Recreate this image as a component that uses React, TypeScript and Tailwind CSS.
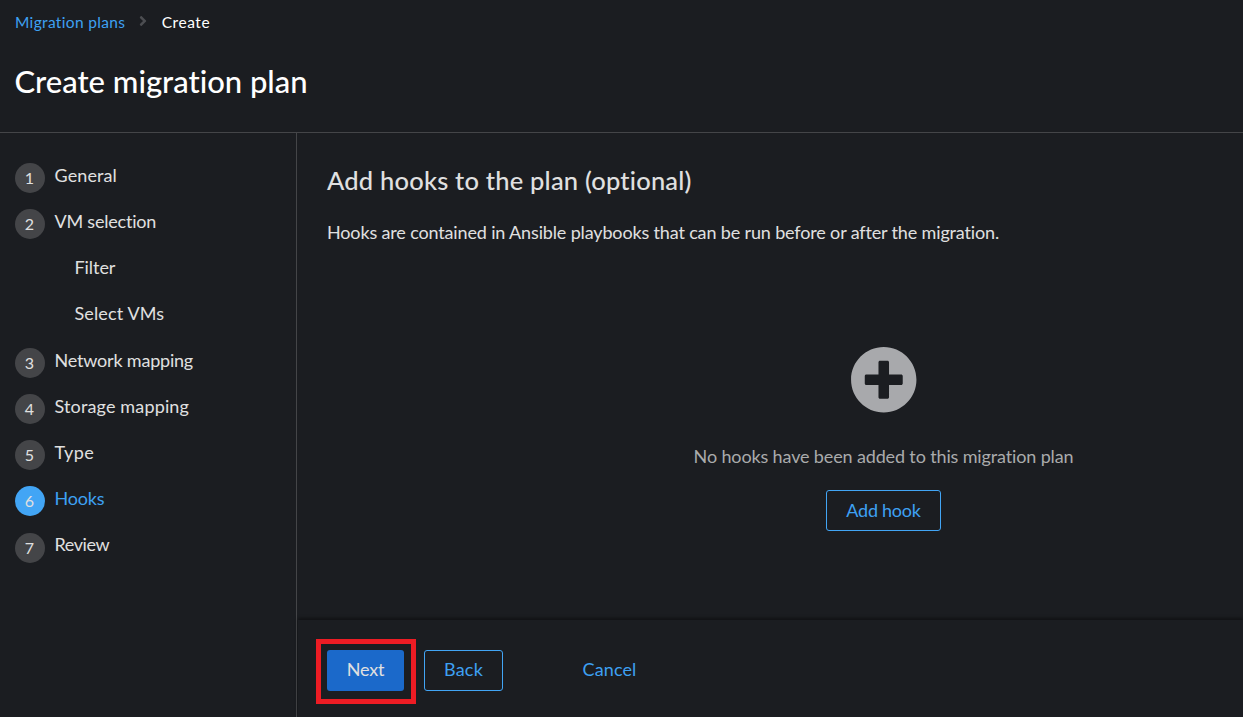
import { FaAngleRight, FaPlusCircle } from "react-icons/fa";

type Step = { label: string; number?: number; active?: boolean; tracking: string };

const steps: Step[] = [
  { label: "General", number: 1, tracking: "tracking-[0.1px]" },
  { label: "VM selection", number: 2, tracking: "tracking-[-0.22px]" },
  { label: "Filter", tracking: "tracking-[-0.05px]" },
  { label: "Select VMs", tracking: "tracking-[0.13px]" },
  { label: "Network mapping", number: 3, tracking: "tracking-[-0.2px]" },
  { label: "Storage mapping", number: 4, tracking: "tracking-[0.15px]" },
  { label: "Type", number: 5, tracking: "tracking-[0.4px]" },
  { label: "Hooks", number: 6, active: true, tracking: "tracking-[-0.2px]" },
  { label: "Review", number: 7, tracking: "tracking-[-0.4px]" },
];

function StepItem({ step }: { step: Step }) {
  return (
    <li className="flex h-[30px] items-center">
      {step.number !== undefined ? (
        <span
          className={`mr-[9.5px] flex size-[30px] shrink-0 items-center justify-center rounded-full pr-px text-base leading-none ${
            step.active ? "bg-[#42a5f5]" : "bg-[#444548]"
          }`}
        >
          {step.number}
        </span>
      ) : (
        <span className="w-[59.5px] shrink-0" />
      )}
      <a href="#" className={`pb-[6.2px] ${step.tracking} ${step.active ? "text-[#3ea1f3]" : ""}`}>
        {step.label}
      </a>
    </li>
  );
}

export default function App() {
  return (
    <div className="flex h-[717px] w-full flex-col overflow-hidden bg-[#1b1d21] font-['Lato',sans-serif] text-lg text-[#e0e0e0]">
      <header className="h-[133px] shrink-0 border-b border-[#444548] pl-[15px]">
        <nav className="flex h-[44px] items-center text-[15.5px]">
          <a href="#" className="tracking-[0.33px] text-[#3ea1f3]">Migration plans</a>
          <FaAngleRight className="mr-[11px] mb-[2px] ml-[9.5px] size-[16px] text-[#4c4d51]" />
          <span className="tracking-[0.55px] text-white">Create</span>
        </nav>
        <h1 className="mt-[13px] -ml-[0.5px] text-[31px] leading-[48px] font-medium tracking-[-0.02px] text-white">
          Create migration plan
        </h1>
      </header>
      <div className="flex min-h-0 flex-1">
        <aside className="w-[297px] shrink-0 border-r border-[#444548] pt-[30px] pl-[15px]">
          <ol className="flex flex-col gap-[16.2px]">
            {steps.map((step) => (
              <StepItem key={step.label} step={step} />
            ))}
          </ol>
        </aside>
        <div className="flex min-w-0 flex-1 flex-col">
          <main className="min-h-0 flex-1 overflow-hidden pt-[28px] pl-[30px]">
            <h2 className="text-[25.5px] leading-[38px] font-medium tracking-[0.2px]">
              Add hooks to the plan (optional)
            </h2>
            <p className="mt-[19px] leading-[28px] tracking-[-0.15px]">
              Hooks are contained in Ansible playbooks that can be run before or after the migration.
            </p>
            <div className="mt-[100px] flex w-[1113px] flex-col items-center">
              <FaPlusCircle className="size-[67.5px] text-[#a8a9ac]" />
              <p className="mt-[28px] leading-[28px] tracking-[-0.14px] text-[#aaabac]">
                No hooks have been added to this migration plan
              </p>
              <button className="mt-[20px] h-[41px] w-[115px] rounded-[3px] border border-[#42a5f5] tracking-[-0.25px] text-[#3ea1f3]">
                Add hook
              </button>
            </div>
          </main>
          <footer className="ml-px flex h-[97px] shrink-0 items-start pt-[19px] pl-[18px] shadow-[0_-2px_3px_rgba(0,0,0,0.4)]">
            <div className="h-[65px] w-[100px] border-[5px] border-[#ed1c24] p-[6px]">
              <button className="h-[41px] w-[77px] rounded-[3px] bg-[#1b69ca] pb-[3px] tracking-[-0.15px]">
                Next
              </button>
            </div>
            <button className="mt-[11px] ml-[8px] h-[41px] w-[79px] rounded-[3px] border border-[#42a5f5] pb-[3px] tracking-[0.2px] text-[#3ea1f3]">
              Back
            </button>
            <button className="mt-[11px] ml-[60px] h-[41px] w-[93px] pb-[3px] tracking-[0.1px] text-[#3ea1f3]">
              Cancel
            </button>
          </footer>
        </div>
      </div>
    </div>
  );
}
